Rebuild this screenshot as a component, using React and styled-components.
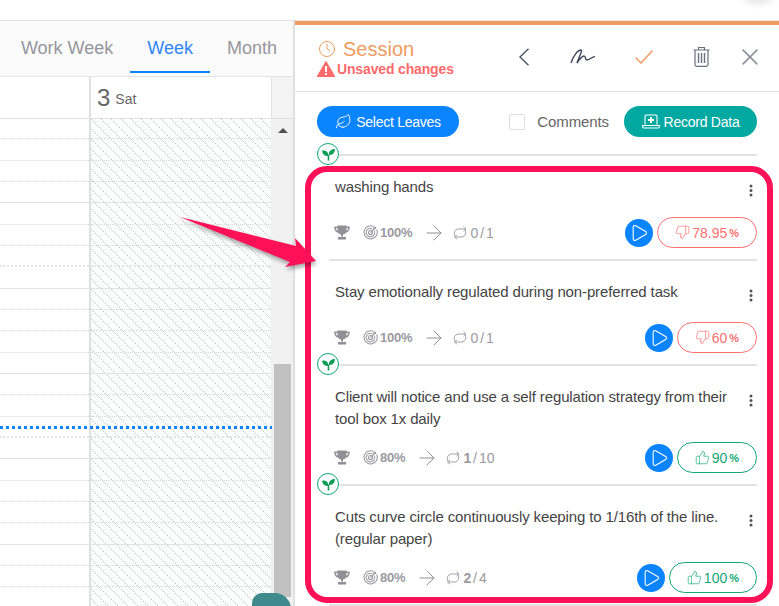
import React from "react";
import styled, { createGlobalStyle } from "styled-components";
import { ArrowRight, Play, ThumbsUp, ThumbsDown, Leaf, Clock } from "lucide-react";

const Global = createGlobalStyle`
  html, body { margin: 0; padding: 0; background: #fff; }
  * { box-sizing: border-box; }
  body { font-family: "Liberation Sans", Arial, sans-serif; }
`;

const hatchTile =
  "data:image/svg+xml,%3Csvg xmlns='http://www.w3.org/2000/svg' width='10' height='10' shape-rendering='crispEdges'%3E%3Cpath fill='%23c8c8c8' d='M0 0h1v1H0zM2 2h1v1H2zM4 4h1v1H4zM6 6h1v1H6zM8 8h1v1H8z'/%3E%3Cpath fill='%23ececec' d='M1 1h1v1H1zM3 3h1v1H3zM5 5h1v1H5zM7 7h1v1H7zM9 9h1v1H9z'/%3E%3C/svg%3E";

const Page = styled.div`
  position: relative;
  width: 779px;
  height: 606px;
  overflow: hidden;
  background: #fff;
  display: flex;
  flex-direction: column;
`;
const TopBar = styled.div`
  height: 21px;
  flex: none;
  border-bottom: 1px solid #e3e3e3;
`;
const CornerShade = styled.div`
  position: absolute;
  top: -14px;
  right: 6px;
  width: 30px;
  height: 14px;
  border-radius: 50%;
  box-shadow: 0 2px 8px rgba(0, 0, 0, 0.14);
`;
const Main = styled.div`
  flex: 1;
  min-height: 0;
  display: flex;
`;

/* Calendar */
const Calendar = styled.section`
  width: 295px;
  flex: none;
  border-right: 2px solid #e0e0e0;
  display: flex;
  flex-direction: column;
  overflow: hidden;
`;
const Tabs = styled.nav`
  height: 56px;
  flex: none;
  margin-right: -1px;
  background: #fbfbfb;
  border-bottom: 1px solid #e3e3e3;
  display: flex;
  justify-content: flex-end;
`;
const Tab = styled.div`
  padding: 0 17px;
  height: 52px;
  line-height: 54px;
  font-size: 18px;
  color: ${p => (p.$active ? "#2f86f5" : "#96969c")};
  border-bottom: ${p => (p.$active ? "2px solid #0a84ff" : "2px solid transparent")};
`;
const DayHeader = styled.div`
  height: 41px;
  flex: none;
  display: flex;
`;
const HeadSpacer = styled.div`
  width: 91px;
  border-right: 2px solid #e0e0e0;
`;
const HeadDay = styled.div`
  width: 181px;
  border-right: 1px solid #e3e3e3;
  padding-left: 6px;
  display: flex;
  align-items: center;
  gap: 5px;
  color: #666;
`;
const DayNum = styled.span`
  font-size: 24px;
`;
const DayName = styled.span`
  font-size: 14px;
  padding-top: 2px;
`;
const HeadScroll = styled.div`
  width: 21px;
  background: #f3f3f3;
`;
const Body = styled.div`
  position: relative;
  flex: 1;
  min-height: 0;
  display: flex;
  border-top: 1px solid #e0e0e0;
`;
const Column = styled.div`
  width: ${p => p.$w}px;
  flex: none;
  border-right: ${p => p.$edge};
  ${p => (p.$hatch ? `background:#fbfcfc url("${hatchTile}") repeat;` : "")}
`;
const Slot = styled.div`
  height: 21.333px;
  border-bottom: ${p =>
    p.$kind === "solid"
      ? "1px solid #e2e2e2"
      : p.$kind === "thick"
      ? "2px dotted #e4e4e4"
      : "1px dotted #d8d8d8"};
  &:first-child {
    height: 20.333px;
  }
`;
const Track = styled.div`
  width: 21px;
  flex: none;
  background: #f1f1f1;
  display: flex;
  flex-direction: column;
  align-items: center;
`;
const UpArrow = styled.div`
  margin-top: 9px;
  width: 0;
  height: 0;
  border-left: 5px solid transparent;
  border-right: 5px solid transparent;
  border-bottom: 5px solid #505050;
`;
const Thumb = styled.div`
  margin-top: 231px;
  width: 17px;
  height: 233px;
  background: #c1c1c1;
`;
const NowLine = styled.div`
  position: absolute;
  top: 307px;
  left: 0;
  width: 272px;
  height: 3px;
  background: repeating-linear-gradient(90deg, #0a84ff 0, #0a84ff 3px, transparent 3px, transparent 6px);
`;
const Fab = styled.div`
  position: absolute;
  left: 252px;
  top: 474px;
  width: 39px;
  height: 20px;
  background: #3e8a8c;
  border-radius: 10px 16px 0 0;
`;

/* Session panel */
const Panel = styled.section`
  flex: 1;
  min-width: 0;
  border-top: 4px solid #ef9a5f;
  display: flex;
  flex-direction: column;
`;
const PanelHead = styled.header`
  height: 67px;
  flex: none;
  border-bottom: 1px solid #e3e3e3;
  padding: 12px 21px 0 22px;
  display: flex;
  justify-content: space-between;
`;
const TitleBlock = styled.div`
  display: flex;
  flex-direction: column;
`;
const SessionRow = styled.div`
  display: flex;
  align-items: center;
  gap: 7px;
  height: 24px;
  margin-left: 1px;
  font-size: 20px;
  color: #ef9a5f;
`;
const UnsavedRow = styled.div`
  display: flex;
  align-items: center;
  gap: 2px;
  height: 16px;
  font-size: 14px;
  font-weight: 700;
  letter-spacing: -0.15px;
  color: #ff6b6b;
`;
const Actions = styled.div`
  display: flex;
  align-items: center;
  gap: 40px;
  height: 39px;
`;
const ActionIcon = styled.span`
  display: flex;
  align-items: center;
  justify-content: center;
  width: ${p => p.$w}px;
  margin-left: ${p => p.$shift || 0}px;
  svg {
    flex: none;
  }
`;
const Toolbar = styled.div`
  flex: none;
  margin-top: 14px;
  padding: 0 22px;
  display: flex;
  justify-content: space-between;
  align-items: center;
`;
const PillButton = styled.div`
  height: 31px;
  width: ${p => p.$w}px;
  border-radius: 16px;
  background: ${p => p.$bg};
  color: #fff;
  font-size: 14px;
  letter-spacing: -0.25px;
  display: flex;
  align-items: center;
  justify-content: center;
  gap: 4px;
`;
const ToolGroup = styled.div`
  display: flex;
  align-items: center;
`;
const CheckBox = styled.span`
  width: 16px;
  height: 16px;
  border: 1px solid #dcdde6;
  border-radius: 2px;
  margin-right: 12px;
`;
const CommentLabel = styled.span`
  font-size: 15px;
  letter-spacing: -0.1px;
  color: #666;
  margin-right: 15px;
`;
const List = styled.div`
  margin: 17px 22px 0 34px;
`;
const Item = styled.article`
  position: relative;
  border-top: 2px solid #e2e2e2;
  padding: 20px 0 11px 6px;
`;
const SproutBadge = styled.span`
  position: absolute;
  left: -12px;
  top: -13px;
  width: 22px;
  height: 22px;
  border-radius: 50%;
  border: 1px solid #12a873;
  background: #fff;
  display: flex;
  align-items: center;
  justify-content: center;
`;
const TitleRow = styled.div`
  display: flex;
  justify-content: space-between;
  min-height: 29px;
  margin-bottom: 12px;
`;
const Title = styled.p`
  margin: 0;
  width: 396px;
  font-size: 15px;
  line-height: 22px;
  letter-spacing: -0.13px;
  color: #444;
`;
const Dots = styled.span`
  margin: 8px 4px 0 0;
  width: 4px;
  height: 13px;
  flex: none;
  display: flex;
`;
const Footer = styled.div`
  display: flex;
  align-items: center;
  justify-content: space-between;
  height: 31px;
`;
const Meta = styled.div`
  display: flex;
  align-items: center;
  margin-left: -1px;
  color: #9a9aa0;
  font-size: 13px;
`;
const TargetWrap = styled.span`
  display: flex;
  margin-left: 13px;
`;
const Percent = styled.b`
  margin: 0 10px 0 2px;
  font-weight: 700;
  letter-spacing: -0.2px;
`;
const RepeatWrap = styled.span`
  display: flex;
  margin-left: 6px;
  margin-right: 2px;
`;
const Count = styled.span`
  font-size: 14px;
  word-spacing: -2px;
`;
const Score = styled.div`
  display: flex;
  align-items: center;
  gap: 4px;
`;
const PlayBtn = styled.span`
  width: 28px;
  height: 28px;
  border-radius: 50%;
  background: #0a84ff;
  display: flex;
  align-items: center;
  justify-content: center;
`;
const ScorePill = styled.span`
  height: 31px;
  border-radius: 16px;
  border: 1px solid ${p => p.$color};
  color: ${p => p.$color};
  padding: 0 17px;
  display: flex;
  align-items: center;
  gap: 2px;
  font-size: 14px;
`;
const PctSign = styled.span`
  font-size: 11px;
  font-weight: 700;
`;

/* Annotation */
const RedFrame = styled.div`
  position: absolute;
  left: 305px;
  top: 166px;
  width: 468px;
  height: 437px;
  border: 6px solid #ff1158;
  border-radius: 22px;
  pointer-events: none;
`;
const ArrowSvg = styled.svg`
  position: absolute;
  left: 170px;
  top: 205px;
  filter: drop-shadow(1px 3px 2px rgba(0, 0, 0, 0.35));
`;

const Trophy = () => (
  <svg width="16" height="15" viewBox="0 0 16 15" fill="none">
    <path d="M3.500 .5h9v5c0 2.400-1.800 4-4.500 4s-4.500-1.600-4.500-4z" fill="#8f8f95" />
    <path d="M4 2.200H1C1 5 2.400 6.600 4.600 7M12 2.200h3C15 5 13.600 6.600 11.400 7" stroke="#8f8f95" strokeWidth="1.500" />
    <path d="M7 9h2v2.500H7zM4 12h8v2.500H4z" fill="#8f8f95" />
  </svg>
);
const Target = () => (
  <svg width="15" height="15" viewBox="0 0 15 15" fill="none" stroke="#9c9ca2" strokeWidth="1.100">
    <path d="M10.500 1.400A6.600 6.600 0 1 0 13.600 4.500" />
    <path d="M9.400 3.700A4.300 4.300 0 1 0 11.300 5.600" />
    <circle cx="7.500" cy="7.500" r="2" />
    <path d="M7.500 7.500L13 2M11 1.500v2h2" />
  </svg>
);
const Repeat = () => (
  <svg width="16" height="14" viewBox="0 0 16 14" fill="none" stroke="#a4a4aa" strokeWidth="1">
    <path d="M3 10A4.500 4.500 0 0 1 6 3H14M11.500 .8L14 3L11.500 5.200" />
    <path d="M13 4A4.500 4.500 0 0 1 10 11H2.500M5 8.800L2.500 11L5 13.200" />
  </svg>
);
const SproutIcon = () => (
  <svg width="13" height="13" viewBox="0 0 14 14" fill="#0f9d58">
    <path d="M6.500 8.500C2.500 9 .3 6.500 .2 2.800 4.300 2.300 7 4.300 6.500 8.500z" />
    <path d="M7.500 7.500C7 3.800 9.500 1.200 13.800 1.200 14 5.300 11.500 8 7.500 7.500z" />
    <path d="M6.100 7h1.700v6.500H6.100z" />
  </svg>
);
const MoreDots = () => (
  <Dots>
    <svg width="4" height="13" viewBox="0 0 4 13" fill="#555">
      <circle cx="2" cy="2" r="1.500" />
      <circle cx="2" cy="6.500" r="1.500" />
      <circle cx="2" cy="11" r="1.500" />
    </svg>
  </Dots>
);
const Warn = () => (
  <svg width="18" height="16" viewBox="0 0 18 16">
    <path d="M9 .5L17.800 15.500H.2z" fill="#ff6b6b" stroke="#ff6b6b" strokeLinejoin="round" />
    <path d="M8 5h2v6H8zM8 12h2v2H8z" fill="#fff" />
  </svg>
);
const Chevron = () => (
  <svg width="12" height="18" viewBox="0 0 12 18" fill="none" stroke="#4a5464" strokeWidth="1.400">
    <path d="M10.500 .8L2 9L10.500 17.200" />
  </svg>
);
const Signature = () => (
  <svg width="25" height="15" viewBox="0 0 25 15" fill="none" stroke="#3f4958" strokeWidth="1.400">
    <path d="M1 14C3 7 8 1 11 1 13 1 8 10 7 14 9 11 12 7 14 7 16 7 15 11 17 11 19 11 22 8 25 7.500" />
  </svg>
);
const CheckMark = () => (
  <svg width="18" height="14" viewBox="0 0 18 14" fill="none" stroke="#ef9a5f" strokeWidth="1.400">
    <path d="M.6 7.500L6 13L17.500 .6" />
  </svg>
);
const Trash = () => (
  <svg width="17" height="21" viewBox="0 0 17 21" fill="none" stroke="#69717e" strokeWidth="1.200">
    <path d="M.5 4h16M5.500 4V1.500h6V4" />
    <path d="M2 4v14.500c0 1 .8 1.800 1.800 1.800h9.400c1 0 1.800-.8 1.800-1.800V4" />
    <path d="M5.500 7v10M8.500 7v10M11.500 7v10" strokeWidth="1.400" />
  </svg>
);
const CloseX = () => (
  <svg width="16" height="16" viewBox="0 0 16 16" fill="none" stroke="#8a8f98" strokeWidth="1.500">
    <path d="M.6 .6L15.400 15.400M15.400 .6L.6 15.400" />
  </svg>
);
const LaptopPlus = () => (
  <svg width="18" height="15" viewBox="0 0 18 15" fill="none" stroke="#fff" strokeWidth="1.100">
    <path d="M3 10.500V2a1 1 0 0 1 1-1h10a1 1 0 0 1 1 1v8.500" />
    <path d="M.6 11.500h16.800v1.300a1.200 1.200 0 0 1-1.200 1.200H1.800a1.200 1.200 0 0 1-1.200-1.200z" />
    <path d="M9 3v6M6 6h6" strokeWidth="2" />
  </svg>
);

const slotKind = k => (k % 4 === 0 ? "solid" : k % 8 === 7 ? "thick" : "dotted");
const slots = Array.from({ length: 23 }, (_, i) => i + 1);

const goals = [
  { title: "washing hands", pct: "100%", count: <Count>0 / 1</Count>, value: "78.95", good: false, sprout: true },
  { title: "Stay emotionally regulated during non-preferred task", pct: "100%", count: <Count>0 / 1</Count>, value: "60", good: false },
  { title: "Client will notice and use a self regulation strategy from their tool box 1x daily", pct: "80%", count: <Count><b>1</b> / 10</Count>, value: "90", good: true, sprout: true },
  { title: "Cuts curve circle continuously keeping to 1/16th of the line. (regular paper)", pct: "80%", count: <Count><b>2</b> / 4</Count>, value: "100", good: true, sprout: true },
];

const GoalItem = ({ goal }) => {
  const color = goal.good ? "#12a873" : "#ff7070";
  const Thumbs = goal.good ? ThumbsUp : ThumbsDown;
  return (
    <Item>
      {goal.sprout && (
        <SproutBadge>
          <SproutIcon />
        </SproutBadge>
      )}
      <TitleRow>
        <Title>{goal.title}</Title>
        <MoreDots />
      </TitleRow>
      <Footer>
        <Meta>
          <Trophy />
          <TargetWrap>
            <Target />
          </TargetWrap>
          <Percent>{goal.pct}</Percent>
          <ArrowRight size={24} strokeWidth={1} color="#8f8f95" />
          <RepeatWrap>
            <Repeat />
          </RepeatWrap>
          {goal.count}
        </Meta>
        <Score>
          <PlayBtn>
            <Play size={20} strokeWidth={1.3} color="#fff" />
          </PlayBtn>
          <ScorePill $color={color}>
            <Thumbs size={15} strokeWidth={1.1} />
            {goal.value}
            <PctSign>%</PctSign>
          </ScorePill>
        </Score>
      </Footer>
    </Item>
  );
};

export default function App() {
  return (
    <Page>
      <Global />
      <TopBar />
      <CornerShade />
      <Main>
        <Calendar>
          <Tabs>
            <Tab>Work Week</Tab>
            <Tab $active>Week</Tab>
            <Tab>Month</Tab>
          </Tabs>
          <DayHeader>
            <HeadSpacer />
            <HeadDay>
              <DayNum>3</DayNum>
              <DayName>Sat</DayName>
            </HeadDay>
            <HeadScroll />
          </DayHeader>
          <Body>
            <Column $w={91} $edge="2px solid #e0e0e0">
              {slots.map(k => (
                <Slot key={k} $kind={slotKind(k)} />
              ))}
            </Column>
            <Column $w={181} $edge="1px solid #f0f0f0" $hatch>
              {slots.map(k => (
                <Slot key={k} $kind={slotKind(k)} />
              ))}
            </Column>
            <Track>
              <UpArrow />
              <Thumb />
            </Track>
            <NowLine />
            <Fab />
          </Body>
        </Calendar>
        <Panel>
          <PanelHead>
            <TitleBlock>
              <SessionRow>
                <Clock size={18} strokeWidth={1.3} />
                Session
              </SessionRow>
              <UnsavedRow>
                <Warn />
                Unsaved changes
              </UnsavedRow>
            </TitleBlock>
            <Actions>
              <ActionIcon $w={12}>
                <Chevron />
              </ActionIcon>
              <ActionIcon $w={25}>
                <Signature />
              </ActionIcon>
              <ActionIcon $w={18}>
                <CheckMark />
              </ActionIcon>
              <ActionIcon $w={17}>
                <Trash />
              </ActionIcon>
              <ActionIcon $w={16} $shift={-8}>
                <CloseX />
              </ActionIcon>
            </Actions>
          </PanelHead>
          <Toolbar>
            <PillButton $w={142} $bg="#0a84ff">
              <Leaf size={17} strokeWidth={1.3} />
              Select Leaves
            </PillButton>
            <ToolGroup>
              <CheckBox />
              <CommentLabel>Comments</CommentLabel>
              <PillButton $w={133} $bg="#00a8a2">
                <LaptopPlus />
                Record Data
              </PillButton>
            </ToolGroup>
          </Toolbar>
          <List>
            {goals.map(g => (
              <GoalItem key={g.title} goal={g} />
            ))}
            <Item />
          </List>
        </Panel>
      </Main>
      <RedFrame />
      <ArrowSvg width="150" height="70" viewBox="0 0 150 70">
        <polygon points="10,12 126,41 125,33 146,56 115,62 120,57" fill="#ff1158" />
      </ArrowSvg>
    </Page>
  );
}
